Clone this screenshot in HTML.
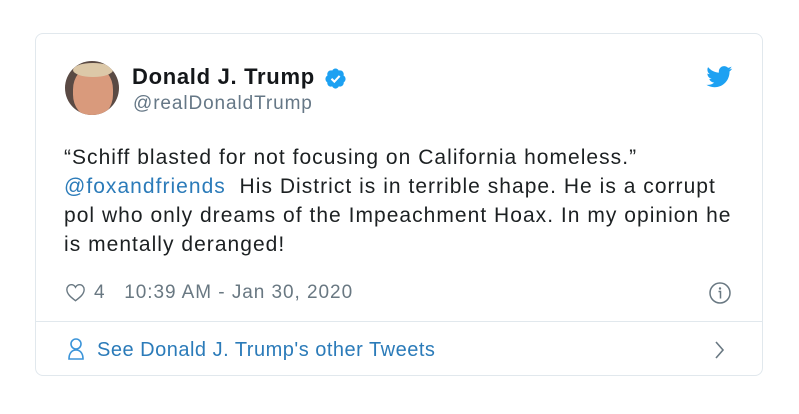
<html><head><style>
body{margin:0;background:#fff;width:799px;height:414px;position:relative;font-family:"Liberation Sans",sans-serif;overflow:hidden}
.card{position:absolute;left:35px;top:33px;width:728px;height:343px;border:1px solid #e1e8ed;border-radius:8px;box-sizing:border-box}
.t{position:absolute;white-space:nowrap}
</style></head><body>
<div class="card"></div>
<div style="position:absolute;left:65px;top:61px;width:54px;height:54px;border-radius:50%;overflow:hidden;background:#5a4a44">
<div style="position:absolute;left:8px;top:6px;width:40px;height:50px;border-radius:45%;background:#d99a7c"></div>
<div style="position:absolute;left:8px;top:2px;width:40px;height:14px;border-radius:50%;background:#dcc8a8"></div>
</div>
<div class="t" style="left:132px;top:64px;font-size:22px;font-weight:bold;color:#14171a;letter-spacing:0.7px">Donald J. Trump</div>
<svg style="position:absolute;left:324px;top:67px" width="23" height="23" viewBox="0 0 24 24"><path fill="#1da1f2" d="M22.5 12.5c0-1.58-.875-2.950-2.148-3.6.154-.435.238-.905.238-1.4 0-2.21-1.71-3.998-3.818-3.998-.47 0-.92.084-1.336.25C14.818 2.415 13.510 1.5 12 1.5s-2.816.917-3.437 2.25c-.415-.165-.866-.25-1.336-.25-2.110 0-3.818 1.790-3.818 4 0 .494.083.964.237 1.4-1.272.65-2.147 2.018-2.147 3.6 0 1.495.782 2.798 1.942 3.486-.02.17-.032.34-.032.514 0 2.210 1.708 4 3.818 4 .47 0 .92-.086 1.335-.25.62 1.334 1.926 2.25 3.437 2.25 1.512 0 2.818-.916 3.437-2.25.415.163.865.248 1.336.248 2.110 0 3.818-1.790 3.818-4 0-.174-.012-.344-.033-.513 1.158-.687 1.943-1.990 1.943-3.484z"/><path fill="none" stroke="#fff" stroke-width="2.2" d="M7.8 12.3l3 3 5.5-6"/></svg>
<div class="t" style="left:133px;top:93px;font-size:19px;color:#657786;letter-spacing:0.9px">@realDonaldTrump</div>
<svg style="position:absolute;left:706px;top:66px" width="27" height="22" viewBox="0 0 24 20"><path fill="#1da1f2" d="M23.6 2.4c-.9.4-1.8.6-2.8.8 1-.6 1.8-1.6 2.1-2.7-.9.6-2 1-3.1 1.2C18.9.7 17.6.1 16.2.1c-2.7 0-4.8 2.2-4.8 4.8 0 .4 0 .8.1 1.1C7.5 5.8 4 3.9 1.6 1 1.2 1.7 1 2.5 1 3.4c0 1.7.9 3.200 2.2 4-.8 0-1.5-.2-2.2-.6v.1c0 2.3 1.7 4.3 3.9 4.7-.4.1-.8.2-1.300.2-.3 0-.6 0-.9-.1.6 1.9 2.4 3.3 4.5 3.4-1.7 1.3-3.7 2.1-6 2.1-.4 0-.8 0-1.2-.1 2.1 1.4 4.7 2.2 7.4 2.2 8.9 0 13.700-7.4 13.700-13.700v-.6c1-.7 1.8-1.6 2.5-2.6z"/></svg>
<div style="position:absolute;left:64px;top:143px;font-size:21px;line-height:29px;color:#1c2022;white-space:nowrap;letter-spacing:1.03px">“Schiff blasted for not focusing on California homeless.”<br><span style="color:#2b7bb9">@foxandfriends</span>&nbsp; His District is in terrible shape. He is a corrupt<br>pol who only dreams of the Impeachment Hoax. In my opinion he<br>is mentally deranged!</div>
<svg style="position:absolute;left:65px;top:283px" width="21" height="19" viewBox="0 0 24 22"><path fill="none" stroke="#697882" stroke-width="1.6" d="M12 20.5C6 16 2 12.5 2 7.5 2 4.5 4.3 2 7.2 2c2 0 3.8 1.2 4.8 3 1-1.8 2.8-3 4.8-3C19.7 2 22 4.5 22 7.5c0 5-4 8.5-10 13z"/></svg>
<div class="t" style="left:94px;top:282px;font-size:19px;color:#697882;letter-spacing:0.95px">4&nbsp;&nbsp; 10:39 AM - Jan 30, 2020</div>
<svg style="position:absolute;left:708px;top:281px" width="24" height="24" viewBox="0 0 24 24"><circle cx="12" cy="12" r="10" fill="none" stroke="#697882" stroke-width="1.5"/><circle cx="12" cy="7.5" r="1.2" fill="#697882"/><path d="M10.5 10.5h2v7" fill="none" stroke="#697882" stroke-width="1.5"/></svg>
<div style="position:absolute;left:36px;top:321px;width:726px;height:1px;background:#e1e8ed"></div>
<svg style="position:absolute;left:67px;top:337px" width="18" height="24" viewBox="0 0 18 24"><circle cx="9" cy="7" r="5" fill="none" stroke="#3b94d9" stroke-width="1.6"/><path d="M2 22c0-6 3-9 7-9s7 3 7 9z" fill="none" stroke="#3b94d9" stroke-width="1.6"/></svg>
<div class="t" style="left:97px;top:339px;font-size:20px;color:#2b7bb9;letter-spacing:0.5px">See Donald J. Trump's other Tweets</div>
<svg style="position:absolute;left:714px;top:340px" width="12" height="20" viewBox="0 0 12 20"><path d="M2 2l7 8-7 8" fill="none" stroke="#697882" stroke-width="1.6"/></svg>
</body></html>
